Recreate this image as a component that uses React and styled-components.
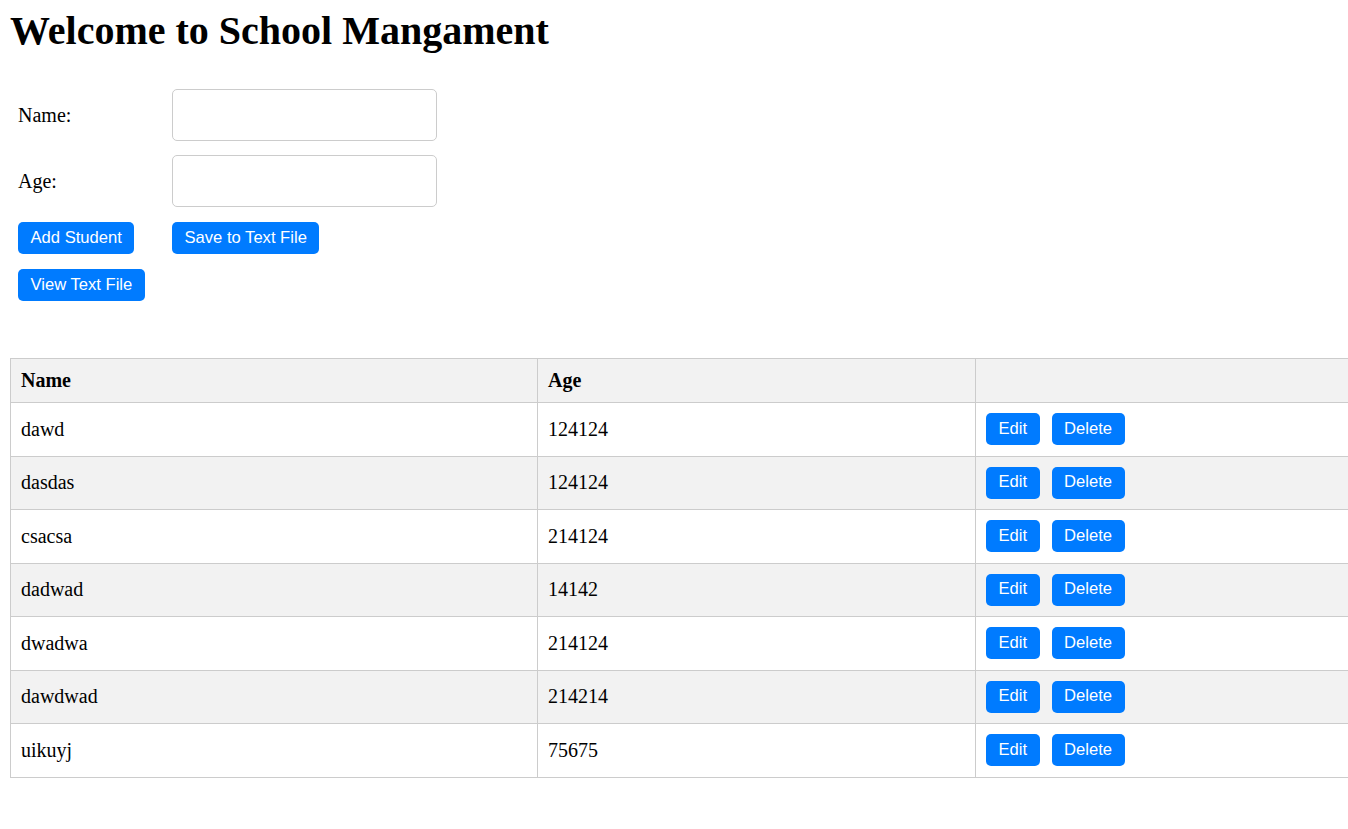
import React from 'react';
import styled, { createGlobalStyle } from 'styled-components';

const GlobalStyle = createGlobalStyle`
  html, body {
    margin: 0;
    padding: 0;
    background: #fff;
    overflow-x: hidden;
  }
  body {
    font-family: "Liberation Serif", "Times New Roman", serif;
    font-size: 20px;
    color: #000;
  }
`;

const Page = styled.div`
  padding: 8px 0 40px 10px;
`;

const Title = styled.h1`
  margin: 0;
  font-size: 40px;
  font-weight: bold;
  line-height: 46px;
`;

const Form = styled.div`
  display: grid;
  grid-template-columns: 154px 265px;
  row-gap: 14px;
  align-items: center;
  justify-items: start;
  margin: 35px 0 0 8px;
`;

const Label = styled.label`
  font-size: 20px;
`;

const Input = styled.input`
  box-sizing: border-box;
  width: 265px;
  height: 52px;
  border: 1px solid #ccc;
  border-radius: 5px;
  font-size: 20px;
  padding: 0 10px;
  outline: none;
`;

const Button = styled.button`
  background: #007bff;
  color: #fff;
  border: none;
  border-radius: 5px;
  height: 32px;
  padding: 0 12.5px 1px;
  font-family: "Liberation Sans", Arial, sans-serif;
  font-size: 16.6px;
  cursor: pointer;
  margin-top: ${p => (p.$form ? '1px' : '0')};
  margin-right: ${p => (p.$gap ? '12px' : '0')};
`;

const Table = styled.table`
  margin-top: 57px;
  width: 1400px;
  border-collapse: collapse;
  table-layout: fixed;
`;

const Th = styled.th`
  text-align: left;
  background: #f2f2f2;
  border: 1px solid #ccc;
  padding: 10px;
  height: 23px;
  font-size: 20px;
`;

const Row = styled.tr`
  background: ${p => (p.$odd ? '#f2f2f2' : '#fff')};
`;

const Td = styled.td`
  border: 1px solid #ccc;
  padding: 10px;
  height: 32.5px;
  font-size: 20px;
`;

const students = [
  ['dawd', '124124'],
  ['dasdas', '124124'],
  ['csacsa', '214124'],
  ['dadwad', '14142'],
  ['dwadwa', '214124'],
  ['dawdwad', '214214'],
  ['uikuyj', '75675'],
];

export default function App() {
  return (
    <>
      <GlobalStyle />
      <Page>
        <Title>Welcome to School Mangament</Title>
        <Form>
          <Label>Name:</Label>
          <Input type="text" />
          <Label>Age:</Label>
          <Input type="text" />
          <Button $form>Add Student</Button>
          <Button $form>Save to Text File</Button>
          <Button $form>View Text File</Button>
        </Form>
        <Table>
          <colgroup>
            <col style={{ width: 527 }} />
            <col style={{ width: 438 }} />
            <col />
          </colgroup>
          <thead>
            <tr>
              <Th>Name</Th>
              <Th>Age</Th>
              <Th></Th>
            </tr>
          </thead>
          <tbody>
            {students.map(([name, age], i) => (
              <Row key={i} $odd={i % 2 === 1}>
                <Td>{name}</Td>
                <Td>{age}</Td>
                <Td>
                  <Button $gap>Edit</Button>
                  <Button>Delete</Button>
                </Td>
              </Row>
            ))}
          </tbody>
        </Table>
      </Page>
    </>
  );
}
